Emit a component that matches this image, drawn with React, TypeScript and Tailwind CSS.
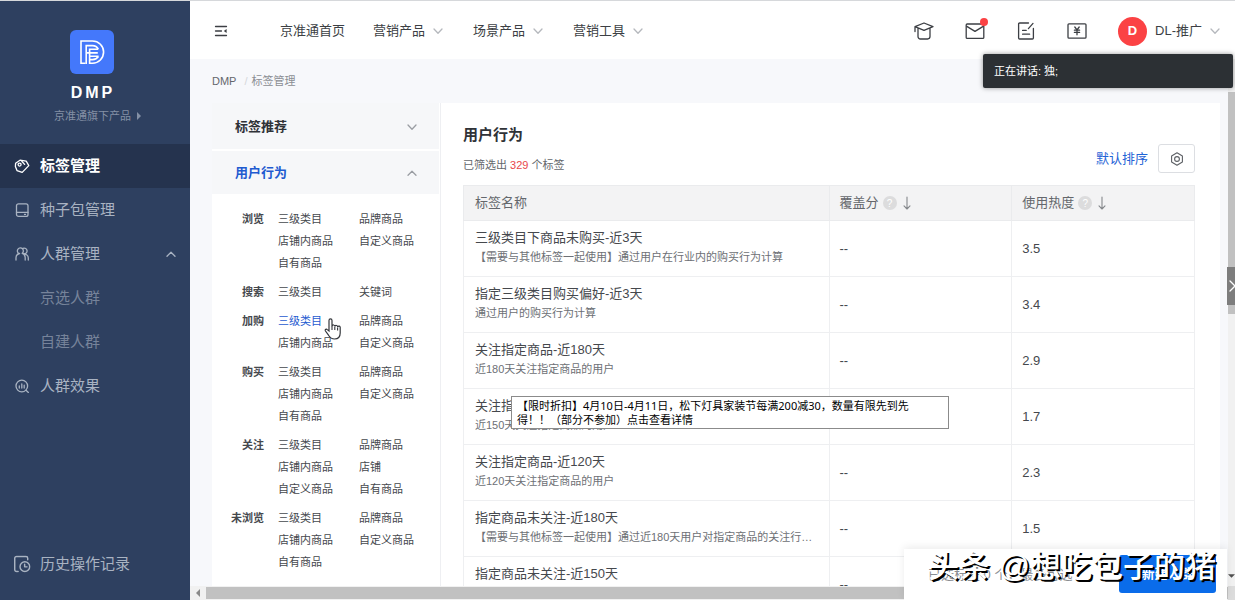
import React from "react";

interface FilterGroup {
  name: string;
  items: string[];
}

interface TagRow {
  name: string;
  desc: string;
  heat: string;
}

const navItems = [
  { label: "营销产品" },
  { label: "场景产品" },
  { label: "营销工具" },
];

const filterGroups: FilterGroup[] = [
  { name: "浏览", items: ["三级类目", "品牌商品", "店铺内商品", "自定义商品", "自有商品"] },
  { name: "搜索", items: ["三级类目", "关键词"] },
  { name: "加购", items: ["三级类目", "品牌商品", "店铺内商品", "自定义商品"] },
  { name: "购买", items: ["三级类目", "品牌商品", "店铺内商品", "自定义商品", "自有商品"] },
  { name: "关注", items: ["三级类目", "品牌商品", "店铺内商品", "店铺", "自定义商品", "自有商品"] },
  { name: "未浏览", items: ["三级类目", "品牌商品", "店铺内商品", "自定义商品", "自有商品"] },
];

const rows: TagRow[] = [
  { name: "三级类目下商品未购买-近3天", desc: "【需要与其他标签一起使用】通过用户在行业内的购买行为计算", heat: "3.5" },
  { name: "指定三级类目购买偏好-近3天", desc: "通过用户的购买行为计算", heat: "3.4" },
  { name: "关注指定商品-近180天", desc: "近180天关注指定商品的用户", heat: "2.9" },
  { name: "关注指定商品-近150天", desc: "近150天关注指定商品的用户", heat: "1.7" },
  { name: "关注指定商品-近120天", desc: "近120天关注指定商品的用户", heat: "2.3" },
  { name: "指定商品未关注-近180天", desc: "【需要与其他标签一起使用】通过近180天用户对指定商品的关注行为计算", heat: "1.5" },
  { name: "指定商品未关注-近150天", desc: "【需要与其他标签一起使用】通过近150天用户对指定商品的关注行为计算", heat: "1.2" },
];

const Icon: React.FC<{ children: React.ReactNode; className?: string; box?: string }> = ({
  children,
  className = "size-4",
  box = "0 0 16 16",
}) => (
  <svg
    viewBox={box}
    className={`shrink-0 ${className}`}
    fill="none"
    stroke="currentColor"
    strokeWidth="1.3"
    strokeLinecap="round"
    strokeLinejoin="round"
    aria-hidden="true"
  >
    {children}
  </svg>
);

const Chevron: React.FC<{ up?: boolean; className?: string }> = ({ up, className = "" }) => (
  <Icon box="0 0 10 10" className={`size-[10px] ${className}`}>
    <path d={up ? "M1 7.2 5 3.2 9 7.2" : "M1 3 5 7.2 9 3"} />
  </Icon>
);

const sideLink = "flex h-11 items-center gap-2.5 pl-[14px] text-[15px]";

const Sidebar = () => (
  <aside className="flex w-[190px] shrink-0 flex-col bg-[#2e4060] text-[#a9b3c2]">
    <div className="flex flex-col items-center pt-[29px] pr-[7px]">
      <svg viewBox="0 0 44 44" className="size-11" aria-hidden="true">
        <rect width="44" height="44" rx="6" fill="#4478fb" />
        <g fill="none" stroke="#fff" strokeWidth="1.6">
          <path d="M15.5 33.2H11V11h11.5a11.1 11.1 0 0 1 0 22.2H19" />
          <path d="M16.2 34V15.6h6.3a6.6 6.6 0 0 1 5.8 3.6M19.6 34V19.2h8.7M16.2 22.9h11.6M19.6 26.300h9M19.6 29.600h2.900a7.200 7.200 0 0 0 6.100-3.300" />
        </g>
      </svg>
      <h1 className="mt-2 pl-[3px] text-base leading-[22px] font-bold tracking-[3px] text-white">DMP</h1>
      <a href="#products" className="mt-1 flex items-center gap-1.5 pl-3 text-[11px] leading-4 text-[#8490a5]">
        京准通旗下产品
        <svg viewBox="0 0 4 8" className="h-2 w-1" fill="currentColor" aria-hidden="true">
          <path d="M0 0 4 4 0 8z" />
        </svg>
      </a>
    </div>
    <nav className="mt-5">
      <a href="#tags" className={`${sideLink} bg-[#25334e] font-bold text-white`}>
        <Icon>
          <path d="M1.600 5.200 6 2.200 12.200 3.200 14.800 7.600 8.200 14.400 3 12.600 1.400 8.400z" />
          <circle cx="5.600" cy="6.600" r="1.500" />
          <path d="M7.800 3.200 10.600 6.400" />
        </Icon>
        标签管理
      </a>
      <a href="#seeds" className={sideLink}>
        <Icon>
          <rect x="2.5" y="1.8" width="11.5" height="12.6" rx="2" />
          <path d="M2.5 10.4H14M10.5 12.4h1" />
        </Icon>
        种子包管理
      </a>
      <a href="#crowds" className={sideLink}>
        <Icon>
          <path d="M4.8 7.5a3 3 0 1 1 3.4-.2M2 14v-2.2c0-2.3 1.3-3.8 3.6-4.3M9 2.4a2.9 2.9 0 1 1 .3 5.4c2.6 0 5 1.7 5 4.2v2M8.200 7.300c2 .8 3 2.400 3 4.300V14" />
        </Icon>
        人群管理
        <Chevron up className="mr-[14px] ml-auto" />
      </a>
      <a href="#selected" className="flex h-11 items-center pl-10 text-[15px] text-[#76839a]">京选人群</a>
      <a href="#custom" className="flex h-11 items-center pl-10 text-[15px] text-[#76839a]">自建人群</a>
      <a href="#effect" className={sideLink}>
        <Icon>
          <circle cx="7.8" cy="8" r="5.8" />
          <path d="M12 12.2 14.4 14.4M5.3 8v2M7.8 6v4M10.2 7.2v2.8" />
        </Icon>
        人群效果
      </a>
    </nav>
    <a href="#history" className={`${sideLink} mt-auto mb-3.5`}>
      <Icon className="size-4 scale-110">
        <path d="M4.5 14.8H3a1.6 1.6 0 0 1-1.6-1.6V2.8A1.6 1.6 0 0 1 3 1.2h8.6a1.6 1.6 0 0 1 1.6 1.6v1.4" />
        <circle cx="10.6" cy="10.4" r="4.4" />
        <path d="M10.4 8.2v2.4h2.2" />
      </Icon>
      历史操作记录
    </a>
  </aside>
);

const Header = () => (
  <header className="flex h-[58px] shrink-0 items-center bg-white pt-0.5 pr-[15px] pl-6 text-[13px] text-[#3c3f44]">
    <button type="button" aria-label="收起菜单">
      <Icon className="size-[14px]" box="0 0 14 14">
        <path d="M1.5 2.5h11M1.5 7h6M1.5 11.5h11" />
        <path d="M12.6 5v4L9.8 7z" fill="currentColor" stroke="none" />
      </Icon>
    </button>
    <nav className="ml-[52px] flex items-center gap-7">
      <a href="#home">京准通首页</a>
      {navItems.map((item) => (
        <button key={item.label} type="button" className="mr-0.5 flex items-center gap-2">
          {item.label}
          <Chevron className="text-[#b5b8bd]" />
        </button>
      ))}
    </nav>
    <div className="ml-auto flex items-center gap-[31px]">
      <button type="button" aria-label="学院">
        <Icon className="size-5" box="0 0 20 20">
          <path d="M10 2 19 5.6 10 9.4 1 5.6zM1 5.6v5M4 7.2v8.4A2.4 2.4 0 0 0 6.4 18h7.2a2.4 2.4 0 0 0 2.4-2.4V7.2" />
        </Icon>
      </button>
      <button type="button" aria-label="消息" className="relative">
        <Icon className="size-5" box="0 0 20 20">
          <rect x="1.2" y="3" width="17.6" height="14.4" rx="1" />
          <path d="m1.8 5.4 8.2 5 8.2-5" />
        </Icon>
        <span className="absolute -top-[3px] -right-[3px] size-2 rounded-full bg-[#fb4244]" />
      </button>
      <button type="button" aria-label="任务">
        <Icon className="size-5" box="0 0 20 20">
          <path d="M12.5 2H3.6a1 1 0 0 0-1 1v14a1 1 0 0 0 1 1h12.8a1 1 0 0 0 1-1V7.5M17 2.4 12.4 7.6M6.6 9.4h3.6M6.6 13.2h7" />
        </Icon>
      </button>
      <button type="button" aria-label="账户">
        <Icon className="size-5" box="0 0 20 20">
          <rect x="1" y="2.8" width="18" height="14.4" rx="1" />
          <path d="m7.8 6 2.2 2.8L12.2 6M10 8.8v5M7.4 9.2h5.2M7.4 11.4h5.2" />
        </Icon>
      </button>
      <button type="button" className="flex items-center">
        <span className="flex size-[29px] items-center justify-center rounded-full bg-[#fb4244] text-[13px] font-bold text-white">
          D
        </span>
        <span className="mr-2 ml-2 text-[13px]">DL-推广</span>
        <Chevron className="text-[#b5b8bd]" />
      </button>
    </div>
  </header>
);

const FilterPanel = () => (
  <section className="w-[229px] shrink-0 border-r border-[#eeeff2] bg-white">
    <button
      type="button"
      className="flex h-[46px] w-[227px] items-center justify-between bg-[#f6f7f9] pt-0.5 pr-[22px] pl-[23px] text-[13px] font-bold text-[#2f3237]"
    >
      标签推荐
      <Chevron className="text-[#9a9da3]" />
    </button>
    <button
      type="button"
      className="mt-0.5 flex h-[43px] w-[227px] items-center justify-between bg-[#f6f7f9] pr-[22px] pl-[23px] text-[13px] font-bold text-[#1f5bd0]"
    >
      用户行为
      <Chevron up className="text-[#9a9da3]" />
    </button>
    <div className="flex flex-col gap-[7px] pt-[14px] text-[11px] leading-[22px] text-[#45484d]">
      {filterGroups.map((group) => (
        <div key={group.name} className="flex">
          <h3 className="w-[52px] shrink-0 text-right font-bold">{group.name}</h3>
          <div className="ml-[14px] grid grow grid-cols-[81px_1fr]">
            {group.items.map((item, i) => (
              <a
                key={item}
                href="#filter"
                className={group.name === "加购" && i === 0 ? "text-[#1f5bd0]" : ""}
              >
                {item}
              </a>
            ))}
          </div>
        </div>
      ))}
    </div>
  </section>
);

const SortHead: React.FC<{ label: string }> = ({ label }) => (
  <th className="w-1/4 border border-[#eaebed] px-[10px] text-left font-normal">
    <span className="flex items-center">
      {label}
      <span className="ml-1 flex size-[14px] items-center justify-center rounded-full bg-[#dcdcdd] text-[10px] text-white">
        ?
      </span>
      <button type="button" aria-label={`按${label}排序`} className="ml-1.5 text-[#85888c]">
        <Icon className="h-[14px] w-2" box="0 0 8 14">
          <path d="M4 1v12M1 9.8 4 13l3-3.2" strokeWidth="1.1" />
        </Icon>
      </button>
    </span>
  </th>
);

const TagTable = () => (
  <table className="mt-[11px] w-full table-fixed border-collapse text-[13px] text-[#45484d]">
    <thead>
      <tr className="h-[35px] bg-[#f3f3f4] text-[#64676c]">
        <th className="w-1/2 border border-[#eaebed] px-[11px] text-left font-normal">标签名称</th>
        <SortHead label="覆盖分" />
        <SortHead label="使用热度" />
      </tr>
    </thead>
    <tbody>
      {rows.map((row) => (
        <tr key={row.name} className="h-14">
          <td className="border border-[#eeeff1] px-[11px] pb-1">
            <p className="truncate leading-5">{row.name}</p>
            <p className="truncate text-[11px] leading-[18px] text-[#6d7075]">{row.desc}</p>
          </td>
          <td className="border border-[#eeeff1] px-[10px]">--</td>
          <td className="border border-[#eeeff1] px-[10px]">{row.heat}</td>
        </tr>
      ))}
    </tbody>
  </table>
);

const TagPanel = () => (
  <section className="mr-2 grow bg-white pt-[21px] pr-[25px] pl-[22px]">
    <div className="flex items-end justify-between">
      <div>
        <h2 className="text-[15px] leading-[22px] font-bold text-[#2f3237]">用户行为</h2>
        <p className="mt-2.5 text-[11px] leading-[18px] text-[#64676c]">
          已筛选出 <span className="text-[11px] text-[#e8474b]">329</span> 个标签
        </p>
      </div>
      <div className="flex items-center gap-[10px] pb-px">
        <button type="button" className="text-[13px] text-[#1f64d6]">默认排序</button>
        <button
          type="button"
          aria-label="设置"
          className="flex h-[29px] w-[37px] items-center justify-center rounded-[3px] border border-[#dcdee2] text-[#5c5f64]"
        >
          <Icon className="size-[14px]" box="0 0 14 14">
            <path d="M7 .8 12.4 3.9v6.2L7 13.2 1.6 10.1V3.9z" strokeWidth="1.1" />
            <circle cx="7" cy="7" r="2.4" strokeWidth="1.1" />
          </Icon>
        </button>
      </div>
    </div>
    <TagTable />
  </section>
);

// Things that float above the page: toast, promo hint, pointer, bottom bar
const Overlays = () => (
  <>
    <div
      role="status"
      className="absolute top-[53px] right-0.5 flex h-[34px] w-[250px] items-center rounded-[2px] bg-[#2c3034] pl-[11px] text-[11px] text-white shadow-[0_0_5px_rgba(0,0,0,0.4)]"
    >
      正在讲话: 独;
    </div>
    <div className="absolute top-[395px] left-[511px] h-[33px] w-[438px] border border-[#8b8b8b] bg-white pt-0.5 pr-8 pl-[5px] font-['Noto_Sans','Noto_Sans_CJK_SC',sans-serif] text-[11px] leading-[14px] text-black">
      <p>【限时折扣】4月10日-4月11日，松下灯具家装节每满200减30，数量有限先到先</p>
      <p>得！！（部分不参加）点击查看详情</p>
    </div>
    <svg viewBox="0 0 18 22" className="absolute top-[317px] left-[324px] h-[22px] w-[18px]" aria-hidden="true">
      <path
        d="M5 13V2.4a1.5 1.5 0 0 1 3 0V8.200a1.400 1.400 0 0 1 2.800.4 1.400 1.400 0 0 1 2.800.6 1.300 1.300 0 0 1 2.600.6V15c0 4-2 6-5.700 6-3.200 0-4.500-1.400-6-3.800L1.300 12.800c-.6-1.200 1-2.200 2-1.200z"
        fill="#fff"
        stroke="#33363b"
        strokeWidth="1.200"
      />
      <path d="M8 8v4M10.800 9v3M13.600 9.600v2.800" stroke="#33363b" strokeWidth="1.100" />
    </svg>
    <button
      type="button"
      aria-label="展开侧栏"
      className="absolute top-[266px] right-0 flex h-[38px] w-2 items-center justify-center overflow-hidden bg-[#7d7d7d] text-white"
    >
      <Icon className="h-3 w-2" box="0 0 8 12">
        <path d="m3 1 5 5-5 5" />
      </Icon>
    </button>
    <footer className="absolute right-2 bottom-0 flex h-[51px] w-[323px] items-start justify-between bg-white pt-1.5 pr-[11px] pl-6 shadow-[0_-2px_8px_rgba(0,0,0,0.08)]">
      <p className="pt-2.5 text-[13px] text-[#8a8d92]">已选标签 0 个，最多可选</p>
      <button type="button" className="h-[38px] w-[97px] rounded-[3px] bg-[#0a6cea] text-[13px] font-bold text-white">
        新建人群
      </button>
    </footer>
    <div className="pointer-events-none absolute right-[19px] bottom-2.5 text-[31px] leading-[46px] font-medium whitespace-nowrap text-white [text-shadow:2px_2px_0_#000]">
      头条 @想吃包子的猪
    </div>
  </>
);

export default function App() {
  return (
    <div className="relative flex h-screen overflow-hidden border-t border-[#d6d8db] bg-[#f7f8fb] font-['Liberation_Sans','Noto_Sans_CJK_SC',sans-serif]">
      <Sidebar />
      <div className="flex min-w-0 grow flex-col">
        <Header />
        <div className="flex min-h-0 grow">
          <main className="flex min-w-0 grow flex-col">
            <nav className="flex h-[44px] shrink-0 items-center gap-2 pl-[22px] text-[11px] text-[#8b8e93]">
              <a href="#dmp" className="text-[11px] text-[#64676c]">DMP</a>
              <span className="-mr-1 text-[#d5d7da]">/</span>
              <span>标签管理</span>
            </nav>
            <div className="flex min-h-0 grow overflow-hidden pl-[22px]">
              <FilterPanel />
              <TagPanel />
            </div>
            <div className="flex h-[14px] shrink-0 items-center bg-[#f1f1f1]">
              <svg viewBox="0 0 4 8" className="mx-1.5 h-2 w-1" fill="#8a8a8a" aria-hidden="true">
                <path d="M4 0v8L0 4z" />
              </svg>
              <div className="h-3 grow bg-[#c1c1c1]" />
            </div>
          </main>
          <div className="flex w-[7px] shrink-0 flex-col items-center bg-[#f1f1f1] pt-[33px]">
            <div className="h-[222px] w-full bg-[#c1c1c1]" />
            <svg viewBox="0 0 8 4" className="mt-auto h-1 w-full" fill="#505050" aria-hidden="true">
              <path d="M0 0h8L4 4z" />
            </svg>
            <div className="mt-2 h-[14px] w-full bg-[#dcdcdc]" />
          </div>
        </div>
      </div>
      <Overlays />
    </div>
  );
}
